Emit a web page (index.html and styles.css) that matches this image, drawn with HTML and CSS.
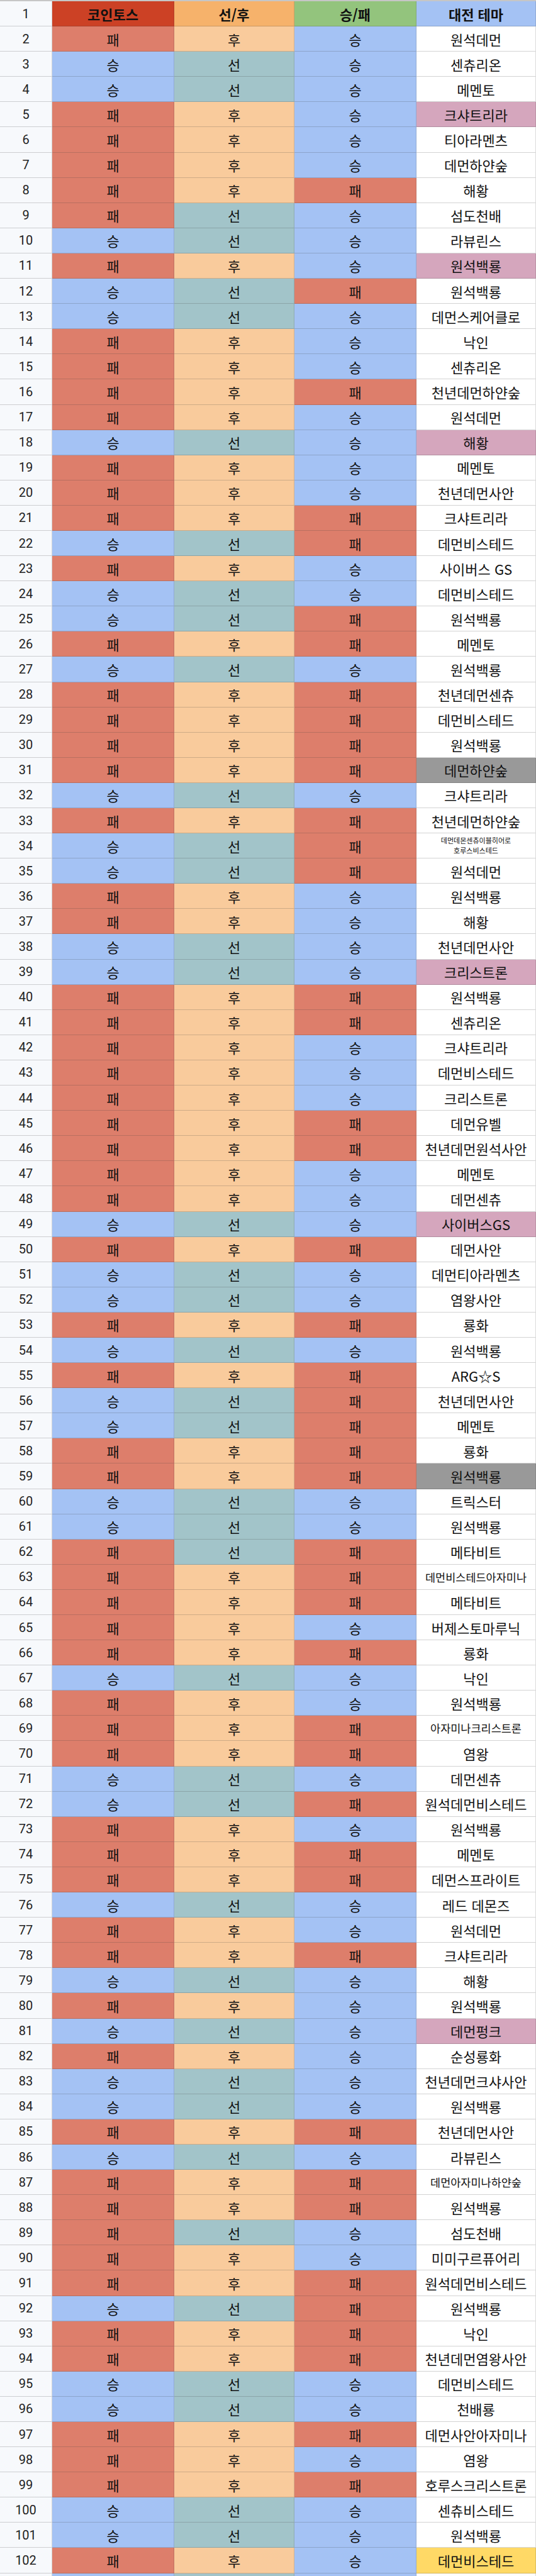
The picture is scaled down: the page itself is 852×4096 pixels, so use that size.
FILE: index.html
```html
<!DOCTYPE html>
<html lang="ko">
<head>
<meta charset="utf-8">
<title>대전 기록</title>
<link rel="stylesheet" href="styles.css">
</head>
<body>
<div class="sheet">
<div class="row hd"><span class="n">1</span><span class="c h1">코인토스</span><span class="c h2">선/후</span><span class="c h3">승/패</span><span class="c h4">대전 테마</span></div>
<div class="row"><span class="n">2</span><span class="c L">패</span><span class="c H">후</span><span class="c W">승</span><span class="c t">원석데먼</span></div>
<div class="row"><span class="n">3</span><span class="c W">승</span><span class="c S">선</span><span class="c W">승</span><span class="c t">센츄리온</span></div>
<div class="row"><span class="n">4</span><span class="c W">승</span><span class="c S">선</span><span class="c W">승</span><span class="c t">메멘토</span></div>
<div class="row"><span class="n">5</span><span class="c L">패</span><span class="c H">후</span><span class="c W">승</span><span class="c t pk">크샤트리라</span></div>
<div class="row"><span class="n">6</span><span class="c L">패</span><span class="c H">후</span><span class="c W">승</span><span class="c t">티아라멘츠</span></div>
<div class="row"><span class="n">7</span><span class="c L">패</span><span class="c H">후</span><span class="c W">승</span><span class="c t">데먼하얀숲</span></div>
<div class="row"><span class="n">8</span><span class="c L">패</span><span class="c H">후</span><span class="c L">패</span><span class="c t">해황</span></div>
<div class="row"><span class="n">9</span><span class="c L">패</span><span class="c S">선</span><span class="c W">승</span><span class="c t">섬도천배</span></div>
<div class="row"><span class="n">10</span><span class="c W">승</span><span class="c S">선</span><span class="c W">승</span><span class="c t">라뷰린스</span></div>
<div class="row"><span class="n">11</span><span class="c L">패</span><span class="c H">후</span><span class="c W">승</span><span class="c t pk">원석백룡</span></div>
<div class="row"><span class="n">12</span><span class="c W">승</span><span class="c S">선</span><span class="c L">패</span><span class="c t">원석백룡</span></div>
<div class="row"><span class="n">13</span><span class="c W">승</span><span class="c S">선</span><span class="c W">승</span><span class="c t">데먼스케어클로</span></div>
<div class="row"><span class="n">14</span><span class="c L">패</span><span class="c H">후</span><span class="c W">승</span><span class="c t">낙인</span></div>
<div class="row"><span class="n">15</span><span class="c L">패</span><span class="c H">후</span><span class="c W">승</span><span class="c t">센츄리온</span></div>
<div class="row"><span class="n">16</span><span class="c L">패</span><span class="c H">후</span><span class="c L">패</span><span class="c t">천년데먼하얀숲</span></div>
<div class="row"><span class="n">17</span><span class="c L">패</span><span class="c H">후</span><span class="c W">승</span><span class="c t">원석데먼</span></div>
<div class="row"><span class="n">18</span><span class="c W">승</span><span class="c S">선</span><span class="c W">승</span><span class="c t pk">해황</span></div>
<div class="row"><span class="n">19</span><span class="c L">패</span><span class="c H">후</span><span class="c W">승</span><span class="c t">메멘토</span></div>
<div class="row"><span class="n">20</span><span class="c L">패</span><span class="c H">후</span><span class="c W">승</span><span class="c t">천년데먼사안</span></div>
<div class="row"><span class="n">21</span><span class="c L">패</span><span class="c H">후</span><span class="c L">패</span><span class="c t">크샤트리라</span></div>
<div class="row"><span class="n">22</span><span class="c W">승</span><span class="c S">선</span><span class="c L">패</span><span class="c t">데먼비스테드</span></div>
<div class="row"><span class="n">23</span><span class="c L">패</span><span class="c H">후</span><span class="c W">승</span><span class="c t">사이버스 GS</span></div>
<div class="row"><span class="n">24</span><span class="c W">승</span><span class="c S">선</span><span class="c W">승</span><span class="c t">데먼비스테드</span></div>
<div class="row"><span class="n">25</span><span class="c W">승</span><span class="c S">선</span><span class="c L">패</span><span class="c t">원석백룡</span></div>
<div class="row"><span class="n">26</span><span class="c L">패</span><span class="c H">후</span><span class="c L">패</span><span class="c t">메멘토</span></div>
<div class="row"><span class="n">27</span><span class="c W">승</span><span class="c S">선</span><span class="c W">승</span><span class="c t">원석백룡</span></div>
<div class="row"><span class="n">28</span><span class="c L">패</span><span class="c H">후</span><span class="c L">패</span><span class="c t">천년데먼센츄</span></div>
<div class="row"><span class="n">29</span><span class="c L">패</span><span class="c H">후</span><span class="c L">패</span><span class="c t">데먼비스테드</span></div>
<div class="row"><span class="n">30</span><span class="c L">패</span><span class="c H">후</span><span class="c L">패</span><span class="c t">원석백룡</span></div>
<div class="row"><span class="n">31</span><span class="c L">패</span><span class="c H">후</span><span class="c L">패</span><span class="c t gy">데먼하얀숲</span></div>
<div class="row"><span class="n">32</span><span class="c W">승</span><span class="c S">선</span><span class="c W">승</span><span class="c t">크샤트리라</span></div>
<div class="row"><span class="n">33</span><span class="c L">패</span><span class="c H">후</span><span class="c L">패</span><span class="c t">천년데먼하얀숲</span></div>
<div class="row"><span class="n">34</span><span class="c W">승</span><span class="c S">선</span><span class="c L">패</span><span class="c t xs">데먼데몬센츄이블히어로<br>호루스비스테드</span></div>
<div class="row"><span class="n">35</span><span class="c W">승</span><span class="c S">선</span><span class="c L">패</span><span class="c t">원석데먼</span></div>
<div class="row"><span class="n">36</span><span class="c L">패</span><span class="c H">후</span><span class="c W">승</span><span class="c t">원석백룡</span></div>
<div class="row"><span class="n">37</span><span class="c L">패</span><span class="c H">후</span><span class="c W">승</span><span class="c t">해황</span></div>
<div class="row"><span class="n">38</span><span class="c W">승</span><span class="c S">선</span><span class="c W">승</span><span class="c t">천년데먼사안</span></div>
<div class="row"><span class="n">39</span><span class="c W">승</span><span class="c S">선</span><span class="c W">승</span><span class="c t pk">크리스트론</span></div>
<div class="row"><span class="n">40</span><span class="c L">패</span><span class="c H">후</span><span class="c L">패</span><span class="c t">원석백룡</span></div>
<div class="row"><span class="n">41</span><span class="c L">패</span><span class="c H">후</span><span class="c L">패</span><span class="c t">센츄리온</span></div>
<div class="row"><span class="n">42</span><span class="c L">패</span><span class="c H">후</span><span class="c W">승</span><span class="c t">크샤트리라</span></div>
<div class="row"><span class="n">43</span><span class="c L">패</span><span class="c H">후</span><span class="c W">승</span><span class="c t">데먼비스테드</span></div>
<div class="row"><span class="n">44</span><span class="c L">패</span><span class="c H">후</span><span class="c W">승</span><span class="c t">크리스트론</span></div>
<div class="row"><span class="n">45</span><span class="c L">패</span><span class="c H">후</span><span class="c L">패</span><span class="c t">데먼유벨</span></div>
<div class="row"><span class="n">46</span><span class="c L">패</span><span class="c H">후</span><span class="c L">패</span><span class="c t">천년데먼원석사안</span></div>
<div class="row"><span class="n">47</span><span class="c L">패</span><span class="c H">후</span><span class="c W">승</span><span class="c t">메멘토</span></div>
<div class="row"><span class="n">48</span><span class="c L">패</span><span class="c H">후</span><span class="c W">승</span><span class="c t">데먼센츄</span></div>
<div class="row"><span class="n">49</span><span class="c W">승</span><span class="c S">선</span><span class="c W">승</span><span class="c t pk">사이버스GS</span></div>
<div class="row"><span class="n">50</span><span class="c L">패</span><span class="c H">후</span><span class="c L">패</span><span class="c t">데먼사안</span></div>
<div class="row"><span class="n">51</span><span class="c W">승</span><span class="c S">선</span><span class="c W">승</span><span class="c t">데먼티아라멘츠</span></div>
<div class="row"><span class="n">52</span><span class="c W">승</span><span class="c S">선</span><span class="c W">승</span><span class="c t">염왕사안</span></div>
<div class="row"><span class="n">53</span><span class="c L">패</span><span class="c H">후</span><span class="c L">패</span><span class="c t">룡화</span></div>
<div class="row"><span class="n">54</span><span class="c W">승</span><span class="c S">선</span><span class="c W">승</span><span class="c t">원석백룡</span></div>
<div class="row"><span class="n">55</span><span class="c L">패</span><span class="c H">후</span><span class="c L">패</span><span class="c t">ARG☆S</span></div>
<div class="row"><span class="n">56</span><span class="c W">승</span><span class="c S">선</span><span class="c L">패</span><span class="c t">천년데먼사안</span></div>
<div class="row"><span class="n">57</span><span class="c W">승</span><span class="c S">선</span><span class="c L">패</span><span class="c t">메멘토</span></div>
<div class="row"><span class="n">58</span><span class="c L">패</span><span class="c H">후</span><span class="c L">패</span><span class="c t">룡화</span></div>
<div class="row"><span class="n">59</span><span class="c L">패</span><span class="c H">후</span><span class="c L">패</span><span class="c t gy">원석백룡</span></div>
<div class="row"><span class="n">60</span><span class="c W">승</span><span class="c S">선</span><span class="c W">승</span><span class="c t">트릭스터</span></div>
<div class="row"><span class="n">61</span><span class="c W">승</span><span class="c S">선</span><span class="c W">승</span><span class="c t">원석백룡</span></div>
<div class="row"><span class="n">62</span><span class="c L">패</span><span class="c S">선</span><span class="c L">패</span><span class="c t">메타비트</span></div>
<div class="row"><span class="n">63</span><span class="c L">패</span><span class="c H">후</span><span class="c L">패</span><span class="c t sm">데먼비스테드아자미나</span></div>
<div class="row"><span class="n">64</span><span class="c L">패</span><span class="c H">후</span><span class="c L">패</span><span class="c t">메타비트</span></div>
<div class="row"><span class="n">65</span><span class="c L">패</span><span class="c H">후</span><span class="c W">승</span><span class="c t">버제스토마루닉</span></div>
<div class="row"><span class="n">66</span><span class="c L">패</span><span class="c H">후</span><span class="c L">패</span><span class="c t">룡화</span></div>
<div class="row"><span class="n">67</span><span class="c W">승</span><span class="c S">선</span><span class="c W">승</span><span class="c t">낙인</span></div>
<div class="row"><span class="n">68</span><span class="c L">패</span><span class="c H">후</span><span class="c W">승</span><span class="c t">원석백룡</span></div>
<div class="row"><span class="n">69</span><span class="c L">패</span><span class="c H">후</span><span class="c L">패</span><span class="c t sm">아자미나크리스트론</span></div>
<div class="row"><span class="n">70</span><span class="c L">패</span><span class="c H">후</span><span class="c L">패</span><span class="c t">염왕</span></div>
<div class="row"><span class="n">71</span><span class="c W">승</span><span class="c S">선</span><span class="c W">승</span><span class="c t">데먼센츄</span></div>
<div class="row"><span class="n">72</span><span class="c W">승</span><span class="c S">선</span><span class="c L">패</span><span class="c t">원석데먼비스테드</span></div>
<div class="row"><span class="n">73</span><span class="c L">패</span><span class="c H">후</span><span class="c W">승</span><span class="c t">원석백룡</span></div>
<div class="row"><span class="n">74</span><span class="c L">패</span><span class="c H">후</span><span class="c L">패</span><span class="c t">메멘토</span></div>
<div class="row"><span class="n">75</span><span class="c L">패</span><span class="c H">후</span><span class="c L">패</span><span class="c t">데먼스프라이트</span></div>
<div class="row"><span class="n">76</span><span class="c W">승</span><span class="c S">선</span><span class="c W">승</span><span class="c t">레드 데몬즈</span></div>
<div class="row"><span class="n">77</span><span class="c L">패</span><span class="c H">후</span><span class="c W">승</span><span class="c t">원석데먼</span></div>
<div class="row"><span class="n">78</span><span class="c L">패</span><span class="c H">후</span><span class="c L">패</span><span class="c t">크샤트리라</span></div>
<div class="row"><span class="n">79</span><span class="c W">승</span><span class="c S">선</span><span class="c W">승</span><span class="c t">해황</span></div>
<div class="row"><span class="n">80</span><span class="c L">패</span><span class="c H">후</span><span class="c W">승</span><span class="c t">원석백룡</span></div>
<div class="row"><span class="n">81</span><span class="c W">승</span><span class="c S">선</span><span class="c W">승</span><span class="c t pk">데먼펑크</span></div>
<div class="row"><span class="n">82</span><span class="c L">패</span><span class="c H">후</span><span class="c W">승</span><span class="c t">순성룡화</span></div>
<div class="row"><span class="n">83</span><span class="c W">승</span><span class="c S">선</span><span class="c W">승</span><span class="c t">천년데먼크샤사안</span></div>
<div class="row"><span class="n">84</span><span class="c W">승</span><span class="c S">선</span><span class="c W">승</span><span class="c t">원석백룡</span></div>
<div class="row"><span class="n">85</span><span class="c L">패</span><span class="c H">후</span><span class="c L">패</span><span class="c t">천년데먼사안</span></div>
<div class="row"><span class="n">86</span><span class="c W">승</span><span class="c S">선</span><span class="c W">승</span><span class="c t">라뷰린스</span></div>
<div class="row"><span class="n">87</span><span class="c L">패</span><span class="c H">후</span><span class="c L">패</span><span class="c t sm">데먼아자미나하얀숲</span></div>
<div class="row"><span class="n">88</span><span class="c L">패</span><span class="c H">후</span><span class="c L">패</span><span class="c t">원석백룡</span></div>
<div class="row"><span class="n">89</span><span class="c L">패</span><span class="c S">선</span><span class="c W">승</span><span class="c t">섬도천배</span></div>
<div class="row"><span class="n">90</span><span class="c L">패</span><span class="c H">후</span><span class="c W">승</span><span class="c t">미미구르퓨어리</span></div>
<div class="row"><span class="n">91</span><span class="c L">패</span><span class="c H">후</span><span class="c L">패</span><span class="c t">원석데먼비스테드</span></div>
<div class="row"><span class="n">92</span><span class="c W">승</span><span class="c S">선</span><span class="c L">패</span><span class="c t">원석백룡</span></div>
<div class="row"><span class="n">93</span><span class="c L">패</span><span class="c H">후</span><span class="c L">패</span><span class="c t">낙인</span></div>
<div class="row"><span class="n">94</span><span class="c L">패</span><span class="c H">후</span><span class="c L">패</span><span class="c t">천년데먼염왕사안</span></div>
<div class="row"><span class="n">95</span><span class="c W">승</span><span class="c S">선</span><span class="c W">승</span><span class="c t">데먼비스테드</span></div>
<div class="row"><span class="n">96</span><span class="c W">승</span><span class="c S">선</span><span class="c W">승</span><span class="c t">천배룡</span></div>
<div class="row"><span class="n">97</span><span class="c L">패</span><span class="c H">후</span><span class="c L">패</span><span class="c t">데먼사안아자미나</span></div>
<div class="row"><span class="n">98</span><span class="c L">패</span><span class="c H">후</span><span class="c W">승</span><span class="c t">염왕</span></div>
<div class="row"><span class="n">99</span><span class="c L">패</span><span class="c H">후</span><span class="c L">패</span><span class="c t">호루스크리스트론</span></div>
<div class="row"><span class="n">100</span><span class="c W">승</span><span class="c S">선</span><span class="c W">승</span><span class="c t">센츄비스테드</span></div>
<div class="row"><span class="n">101</span><span class="c W">승</span><span class="c S">선</span><span class="c W">승</span><span class="c t">원석백룡</span></div>
<div class="row"><span class="n">102</span><span class="c L">패</span><span class="c H">후</span><span class="c W">승</span><span class="c t yl">데먼비스테드</span></div>
<div class="row"><span class="n"></span><span class="c W"></span><span class="c S"></span><span class="c W"></span><span class="c t"></span></div>
</div>
</body>
</html>
```
FILE: styles.css
```css
html, body {
  margin: 0;
  padding: 0;
  background: #ffffff;
}
.sheet {
  width: 852px;
  height: 4096px;
  overflow: hidden;
  border-top: 2px solid #c6c6c6;
  box-sizing: border-box;
  font-family: "Noto Sans CJK KR", sans-serif;
  color: #111;
}
.row {
  display: grid;
  grid-template-columns: 83px 194px 191px 194px 190px;
  height: 40.1px;
}
.row > span {
  display: flex;
  align-items: center;
  justify-content: center;
  box-sizing: border-box;
  border-bottom: 1.5px solid rgba(60, 60, 60, 0.22);
  border-right: 1px solid rgba(60, 60, 60, 0.18);
  white-space: nowrap;
  overflow: hidden;
  font-size: 22px;
  line-height: 1;
}
.n {
  background: #f7f9fc;
  font-family: Roboto, "Noto Sans CJK KR", sans-serif;
  font-size: 20px !important;
  color: #222;
}
.hd .c {
  font-weight: bold;
}
.h1 { background: #cc4125; }
.h2 { background: #f6b26b; }
.h3 { background: #93c47d; }
.h4 { background: #a4c2f4; }
.L { background: #dd7e6b; }
.W { background: #a4c2f4; }
.S { background: #a2c4c9; }
.H { background: #f9cb9c; }
.t { background: #ffffff; }
.pk { background: #d5a6bd; }
.gy { background: #999999; }
.yl { background: #ffd966; }
.row > .sm { font-size: 17.5px; }
.row > .xs {
  font-size: 11px;
  line-height: 1.4;
  text-align: center;
}
```
